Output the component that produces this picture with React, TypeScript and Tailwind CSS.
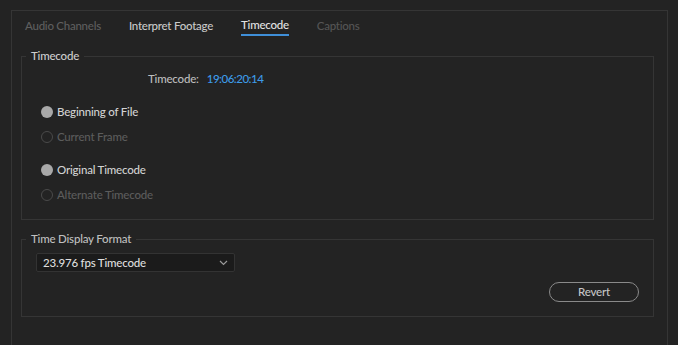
import React from "react";

const font = { fontFamily: "Lato, 'Open Sans', sans-serif" };

function Radio({ label, checked }: { label: string; checked: boolean }) {
  return (
    <div className="flex items-center h-[25px] pl-[19px]">
      {checked ? (
        <span className="w-[12px] h-[12px] rounded-full bg-[#a9a9a9]" />
      ) : (
        <span className="w-[12px] h-[12px] rounded-full border border-[#4a4a4a]" />
      )}
      <span
        className={
          "ml-[4px] text-[11.5px] tracking-[-0.2px] font-medium " +
          (checked ? "text-[#d2d2d2]" : "text-[#5c5c5c]")
        }
      >
        {label}
      </span>
    </div>
  );
}

export default function App() {
  return (
    <div
      className="w-[678px] h-[345px] bg-[#232323] overflow-hidden pt-[10px] pl-[11px]"
      style={font}
    >
      <div className="w-[657px] h-[400px] border border-[#353535] bg-[#232323] px-[9px]">
        {/* Tabs */}
        <div className="flex items-start h-[26px] pt-[6px] text-[11.5px] tracking-[-0.25px] font-medium pl-[4px] gap-[28px]">
          <div className="text-[#5e5e5e]">Audio Channels</div>
          <div className="text-[#c9c9c9]">Interpret Footage</div>
          <div className="flex flex-col items-stretch">
            <span className="text-[#e2e2e2] leading-[15px]">Timecode</span>
            <span className="h-[2px] bg-[#3f8fd8] mt-[2px]" />
          </div>
          <div className="text-[#555555]">Captions</div>
        </div>

        {/* Timecode group */}
        <fieldset className="mt-[12px] border border-[#353535] h-[171px] w-[633px]">
          <legend className="ml-[4px] px-[5px] text-[11.5px] tracking-[-0.2px] font-medium text-[#cdcdcd] leading-[14px]">
            Timecode
          </legend>
          <div className="flex items-center h-[18px] mt-[7px] pl-[126px] text-[11.5px] tracking-[-0.2px] font-medium">
            <span className="text-[#bdbdbd]">Timecode:</span>
            <span className="ml-[8px] text-[#3d9be9] tracking-[-0.5px]">19:06:20:14</span>
          </div>
          <div className="mt-[11px]">
            <Radio label="Beginning of File" checked />
            <Radio label="Current Frame" checked={false} />
          </div>
          <div className="mt-[8px]">
            <Radio label="Original Timecode" checked />
            <Radio label="Alternate Timecode" checked={false} />
          </div>
        </fieldset>

        {/* Time Display Format */}
        <fieldset className="mt-[12px] border border-[#353535] h-[85px] w-[633px]">
          <legend className="ml-[4px] px-[5px] text-[11.5px] tracking-[-0.2px] font-medium text-[#bfbfbf] leading-[14px]">
            Time Display Format
          </legend>
          <div className="px-[14px]">
            <div className="mt-[7px] w-[199px] h-[19px] bg-[#1b1b1b] border border-[#333333] rounded-[2px] flex items-center justify-between pl-[6px] pr-[6px]">
              <span className="text-[11.5px] tracking-[-0.2px] font-medium text-[#dedede]">
                23.976 fps Timecode
              </span>
              <svg width="9" height="6" viewBox="0 0 9 6" fill="none">
                <path d="M1 1 L4.5 4.5 L8 1" stroke="#9a9a9a" strokeWidth="1.2" />
              </svg>
            </div>
            <div className="flex justify-end mt-[10px]">
              <button className="w-[90px] h-[20px] rounded-full border-[1.5px] border-[#8a8a8a] text-[11.5px] tracking-[-0.2px] font-medium text-[#c6c6c6] flex items-center justify-center">
                Revert
              </button>
            </div>
          </div>
        </fieldset>
      </div>
    </div>
  );
}
